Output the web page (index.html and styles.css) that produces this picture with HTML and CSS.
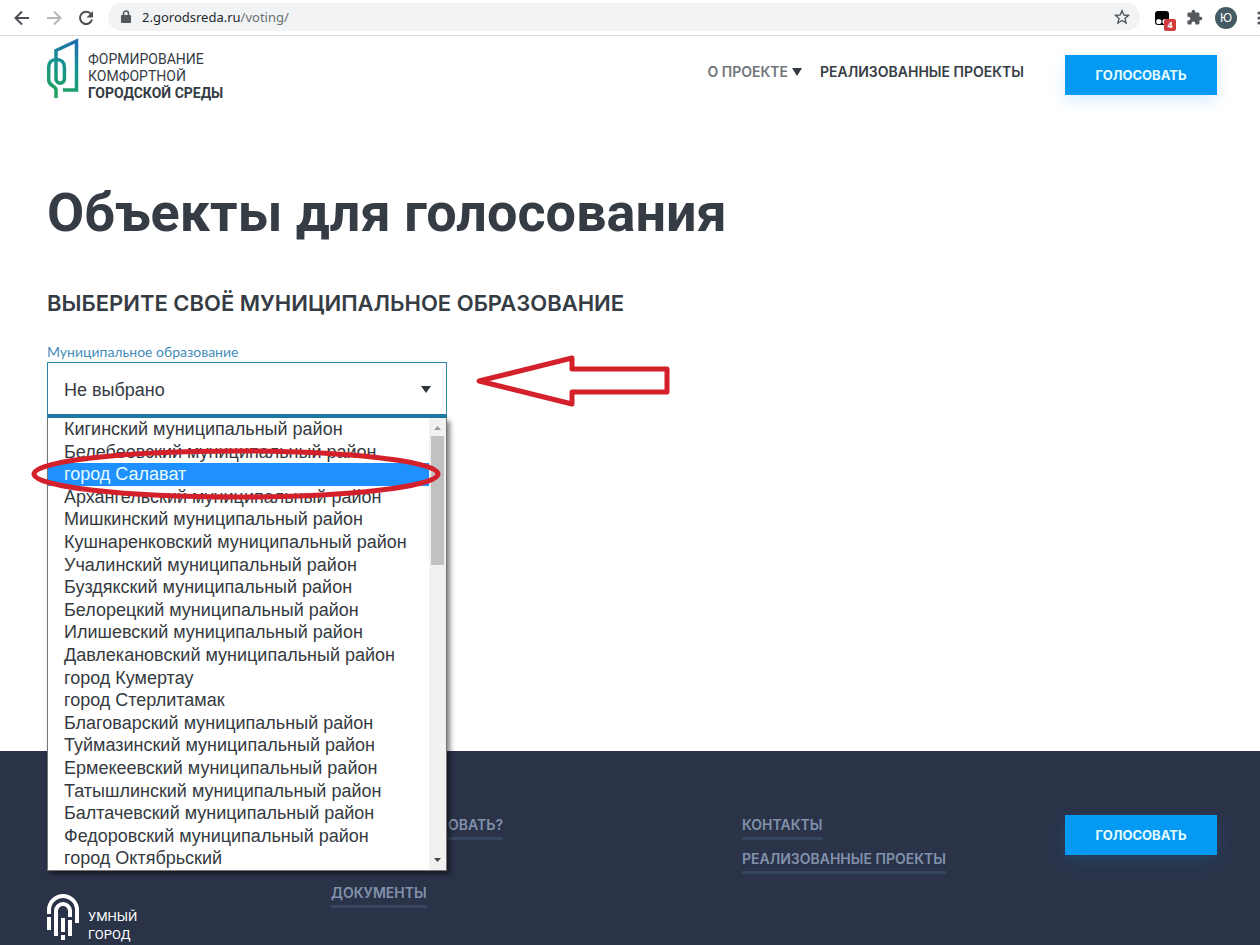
FILE: index.html
```
<!DOCTYPE html>
<html lang="ru">
<head>
<meta charset="utf-8">
<title>Объекты для голосования</title>
<link rel="stylesheet" href="styles.css">
</head>
<body>
<div class="browser">
  <button class="tool" aria-label="Назад"><svg width="16" height="16" viewBox="0 0 16 16" fill="none" stroke="#4d5156" stroke-width="2"><path d="M15 8H2M8 1.500 1.500 8 8 14.500"/></svg></button>
  <button class="tool" aria-label="Вперёд"><svg width="16" height="16" viewBox="0 0 16 16" fill="none" stroke="#b4b6b9" stroke-width="2"><path d="M1 8h13M8 1.500 14.500 8 8 14.500"/></svg></button>
  <button class="tool" aria-label="Обновить"><svg width="16" height="16" viewBox="0 0 16 16"><path d="M13 4.200A6.100 6.100 0 1 0 14 9.500" fill="none" stroke="#4d5156" stroke-width="2"/><path d="M15 1v6.500H8.500z" fill="#4d5156"/></svg></button>
  <div class="address">
    <svg width="10" height="13" viewBox="0 0 10 13"><path d="M2.500 5.500V3.500a2.500 2.500 0 0 1 5 0v2" fill="none" stroke="#54585c" stroke-width="1.500"/><rect y="5" width="10" height="8" rx="1" fill="#54585c"/></svg>
    <span class="url">2.gorodsreda.ru<span class="url-path">/voting/</span></span>
    <button class="tool star" aria-label="Добавить в закладки"><svg width="16" height="16" viewBox="0 0 16 16" fill="none" stroke="#54585c" stroke-width="1.400"><path d="M8 1.700 9.900 6l4.600.4-3.500 3 1.100 4.600L8 11.500 3.900 14 5 9.400l-3.500-3L6.100 6z"/></svg></button>
  </div>
  <button class="tool ext" aria-label="Расширение">
    <svg width="14" height="14" viewBox="0 0 14 14"><rect width="14" height="14" rx="3" fill="#050505"/><circle cx="3.800" cy="10.500" r="2.600" fill="#fff"/><circle cx="10" cy="10.500" r="2.600" fill="#fff"/></svg>
    <span class="count">4</span>
  </button>
  <button class="tool puzzle" aria-label="Расширения"><svg width="17" height="17" viewBox="0 0 24 24" fill="#54585c"><path d="M20.500 11H19V7a2 2 0 0 0-2-2h-4V3.500a2.500 2.500 0 0 0-5 0V5H4a2 2 0 0 0-2 2v3.800h1.500a2.700 2.700 0 0 1 0 5.400H2V20a2 2 0 0 0 2 2h3.800v-1.500a2.700 2.700 0 0 1 5.400 0V22H17a2 2 0 0 0 2-2v-4h1.500a2.500 2.500 0 0 0 0-5z"/></svg></button>
  <button class="avatar">Ю</button>
  <button class="tool dots" aria-label="Меню"><svg width="4" height="14" viewBox="0 0 4 14" fill="#54585c"><circle cx="2" cy="2" r="1.600"/><circle cx="2" cy="7" r="1.600"/><circle cx="2" cy="12" r="1.600"/></svg></button>
</div>

<header class="header">
  <a class="logo" href="#">
    <svg width="34" height="62" viewBox="0 0 34 62" fill="none"><defs><linearGradient id="brand" gradientUnits="userSpaceOnUse" x1="30" y1="4" x2="6" y2="58"><stop offset="0" stop-color="#1f6fae"/><stop offset=".45" stop-color="#16948f"/><stop offset="1" stop-color="#1fa556"/></linearGradient></defs><path d="M17 52H30.500V3L10 12.500V41a4.200 4.200 0 0 0 8.400 0V29c0-4.500-3-7.500-7.900-7.500S2.700 24.500 2.700 29v13c0 6.500 7.300 5.500 7.300 10v8" stroke="url(#brand)" stroke-width="3.500"/></svg>
    <span class="logo-text">ФОРМИРОВАНИЕ<br>КОМФОРТНОЙ<br><b>ГОРОДСКОЙ СРЕДЫ</b></span>
  </a>
  <nav class="nav">
    <a class="nav-link muted" href="#">О ПРОЕКТЕ<svg width="10" height="8" viewBox="0 0 10 8"><path d="M0 0h10L5 8z" fill="#353a40"/></svg></a>
    <a class="nav-link" href="#">РЕАЛИЗОВАННЫЕ ПРОЕКТЫ</a>
  </nav>
  <button class="vote">ГОЛОСОВАТЬ</button>
</header>

<main class="main">
  <h1 class="title">Объекты для голосования</h1>
  <h2 class="subtitle">ВЫБЕРИТЕ СВОЁ МУНИЦИПАЛЬНОЕ ОБРАЗОВАНИЕ</h2>
  <div class="row">
    <div class="field">
      <label class="label" for="area">Муниципальное образование</label>
      <div class="select-box">
        <select class="select" id="area"><option>Не выбрано</option></select>
        <svg class="caret" width="10" height="7" viewBox="0 0 10 7"><path d="M0 0h10L5 7z" fill="#30353b"/></svg>
        <div class="menu">
          <ul class="options" role="listbox" aria-label="Муниципальное образование">
            <li role="option">Кигинский муниципальный район</li>
            <li role="option">Белебеевский муниципальный район</li>
            <li role="option" class="active" aria-selected="true">город Салават</li>
            <li role="option">Архангельский муниципальный район</li>
            <li role="option">Мишкинский муниципальный район</li>
            <li role="option">Кушнаренковский муниципальный район</li>
            <li role="option">Учалинский муниципальный район</li>
            <li role="option">Буздякский муниципальный район</li>
            <li role="option">Белорецкий муниципальный район</li>
            <li role="option">Илишевский муниципальный район</li>
            <li role="option">Давлекановский муниципальный район</li>
            <li role="option">город Кумертау</li>
            <li role="option">город Стерлитамак</li>
            <li role="option">Благоварский муниципальный район</li>
            <li role="option">Туймазинский муниципальный район</li>
            <li role="option">Ермекеевский муниципальный район</li>
            <li role="option">Татышлинский муниципальный район</li>
            <li role="option">Балтачевский муниципальный район</li>
            <li role="option">Федоровский муниципальный район</li>
            <li role="option">город Октябрьский</li>
          </ul>
          <div class="scrollbar">
            <svg width="7" height="4" viewBox="0 0 7 4"><path d="M0 4h7L3.500 0z" fill="#9a9a9a"/></svg>
            <div class="thumb"></div>
            <svg class="down" width="7" height="4" viewBox="0 0 7 4"><path d="M0 0h7L3.500 4z" fill="#444"/></svg>
          </div>
        </div>
        <svg class="ring" width="410" height="52" viewBox="0 0 410 52" fill="none"><ellipse cx="205" cy="26" rx="202" ry="23" stroke="#d3202a" stroke-width="5"/></svg>
      </div>
    </div>
    <svg class="arrow" width="196" height="54" viewBox="0 0 196 54" fill="none"><path d="M4 27 97 4v11h95v23H97v12z" stroke="#d3202a" stroke-width="5" stroke-linejoin="round"/></svg>
  </div>
</main>

<footer class="footer">
  <a class="smart" href="#">
    <svg width="32" height="47" viewBox="0 0 32 47" fill="none" stroke="#fff" stroke-width="4"><path d="M2 20v-4a14 14 0 0 1 28 0v13M2 23v13M9 42V17a7 7 0 0 1 14 0v6M16 24v14M16 41v5M23 26v16"/></svg>
    <span>УМНЫЙ<br>ГОРОД</span>
  </a>
  <nav class="links">
    <a class="behind" href="#">ОВАТЬ?</a>
    <a class="last" href="#">ДОКУМЕНТЫ</a>
  </nav>
  <nav class="links">
    <a href="#">КОНТАКТЫ</a>
    <a href="#">РЕАЛИЗОВАННЫЕ ПРОЕКТЫ</a>
  </nav>
  <button class="vote">ГОЛОСОВАТЬ</button>
</footer>
</body>
</html>
```
FILE: styles.css
```
* { box-sizing: border-box; }
body {
  margin: 0;
  min-height: 100vh;
  display: flex;
  flex-direction: column;
  background: #fff;
  color: #353c44;
  font-family: Inter, "Liberation Sans", sans-serif;
  overflow-x: hidden;
}
button { border: 0; padding: 0; background: none; font: inherit; }
a { color: inherit; text-decoration: none; }
svg { display: block; flex: none; }

.browser {
  display: flex;
  align-items: center;
  height: 36px;
  padding-left: 14px;
  border-bottom: 1px solid #d9dbde;
  overflow: hidden;
}
.tool { display: flex; margin-right: 16px; flex: none; }
.address {
  flex: 1;
  display: flex;
  align-items: center;
  height: 28px;
  margin: 0 15px 2px -2px;
  padding: 0 10px 0 13px;
  border-radius: 14px;
  background: #f1f3f4;
}
.url { flex: 1; margin-left: 11px; font: 13px/18px "Noto Sans", sans-serif; color: #25282c; }
.url-path { color: #6b7075; }
.star { margin: 0; }
.ext { position: relative; margin-right: 17px; }
.count {
  position: absolute;
  left: 9px;
  top: 8px;
  width: 12px;
  border-radius: 2px;
  background: #cf3d3f;
  color: #fff;
  font: bold 9px/12px "Open Sans", sans-serif;
  text-align: center;
}
.puzzle { margin-right: 12px; }
.avatar {
  width: 22px;
  height: 22px;
  margin-right: 20px;
  border-radius: 50%;
  background: #455a64;
  color: #fff;
  font-size: 12px;
}
.dots { margin-right: -1px; }

.header {
  display: flex;
  align-items: flex-start;
  padding: 2px 43px 0 46px;
}
.logo { display: flex; gap: 8px; margin-right: auto; }
.logo-text { padding-top: 13px; font: 14px/17px Roboto, sans-serif; }
.nav { display: flex; gap: 18px; padding-top: 24px; }
.nav-link {
  display: flex;
  align-items: center;
  gap: 4px;
  font-size: 14px;
  font-weight: 600;
  line-height: 20px;
}
.muted { color: #70757a; }
.vote {
  width: 152px;
  height: 40px;
  background: #0499f2;
  box-shadow: 0 6px 16px rgba(4, 153, 242, .16);
  color: #e6fbff;
  font-size: 13px;
  font-weight: 700;
}
.header .vote { margin: 17px 0 0 41px; }

.main { flex: 1; padding: 79px 47px 0; }
.title { margin: 0; font: 700 54px/64px Roboto, sans-serif; }
.subtitle { margin: 44px 0 0; font-size: 22px; font-weight: 600; line-height: 28px; }
.row { display: flex; align-items: flex-start; gap: 28px; margin-top: 25px; }
.field { width: 400px; }
.label { display: block; font: 14px/20px Lato, sans-serif; color: #3f8db8; }
.select-box { position: relative; }
.select {
  display: block;
  width: 100%;
  height: 56px;
  padding: 2px 16px 0;
  border: 1px solid #2e86ac;
  border-bottom: 4px solid #217aa3;
  border-radius: 0;
  background: #fff;
  color: #353a3f;
  appearance: none;
  font: 18px/24px "Liberation Sans", Arial, sans-serif;
}
.caret { position: absolute; right: 16px; top: 24px; }
.menu {
  position: absolute;
  top: 100%;
  left: 0;
  width: 100%;
  height: 453px;
  display: flex;
  border: 1px solid #767676;
  border-top: 0;
  background: #fff;
  box-shadow: 3px 3px 5px rgba(0, 0, 0, .5);
}
.options {
  flex: 1;
  display: grid;
  grid-auto-rows: 1fr;
  margin: 0;
  padding: 0;
  list-style: none;
  color: #353a3f;
  font: 18px/22px "Liberation Sans", Arial, sans-serif;
}
.options li { padding-left: 16px; }
.active { background: #1e90ff; color: #e6fbff; }
.scrollbar {
  display: flex;
  flex-direction: column;
  align-items: center;
  width: 17px;
  padding: 8px 0;
  background: #f1f1f1;
}
.thumb { width: 13px; height: 129px; margin-top: 6px; background: #c1c1c1; }
.down { margin-top: auto; }
.ring { position: absolute; left: -16px; top: 86px; }
.arrow { margin-top: 12px; }

.footer {
  display: grid;
  grid-template-columns: 284fr 411fr 323fr 152px;
  align-items: start;
  min-height: 194px;
  padding: 64px 43px 0 47px;
  background: #2a3348;
}
.smart {
  display: flex;
  gap: 9px;
  margin-top: 79px;
  color: #fff;
  font: 13px/18px Roboto, sans-serif;
}
.smart span { padding-top: 14px; }
.links { display: flex; flex-direction: column; align-items: flex-start; gap: 9px; }
.links a {
  border-bottom: 3px solid #37465f;
  color: #8292ad;
  font-size: 14px;
  font-weight: 600;
  line-height: 20px;
  padding-bottom: 2px;
}
.links .behind { padding-left: 117px; }
.links .last { margin-top: 34px; }
```
